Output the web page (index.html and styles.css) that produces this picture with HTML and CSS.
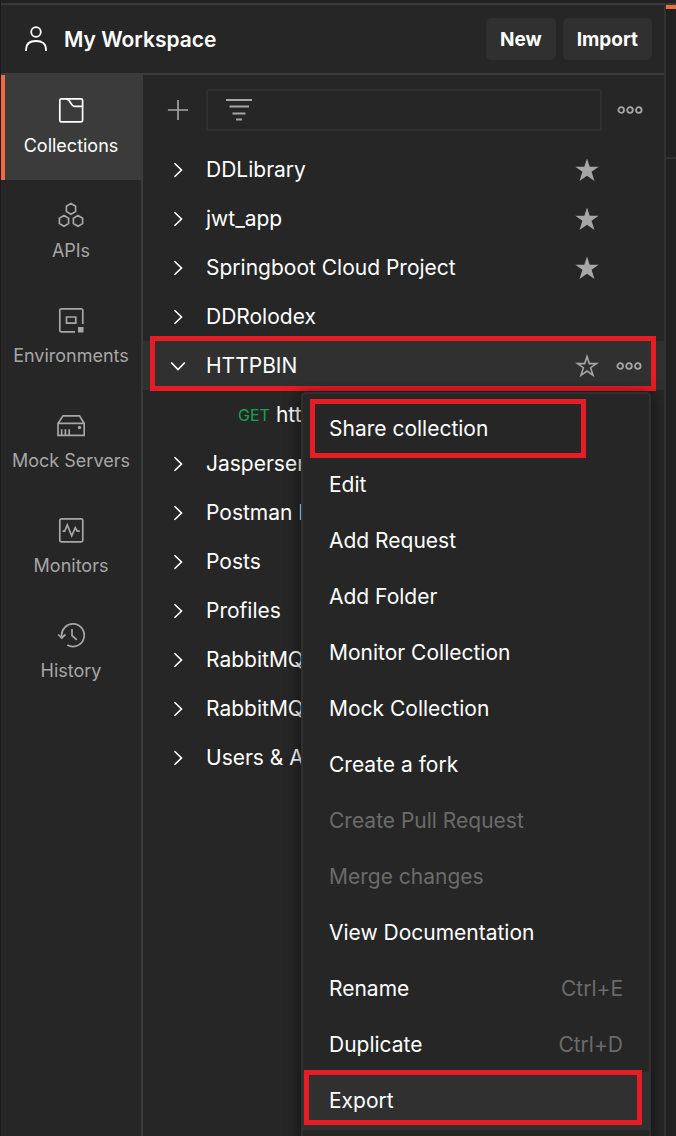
FILE: index.html
```html
<!DOCTYPE html>
<html lang="en">
<head>
<meta charset="utf-8">
<title>My Workspace</title>
<link rel="stylesheet" href="styles.css">
</head>
<body>
<svg class="defs" aria-hidden="true">
  <symbol id="chevron" viewBox="0 0 24 24"><path d="M8.500 5.200l7 6.800-7 6.800" fill="none" stroke="currentColor" stroke-width="1.600"/></symbol>
  <symbol id="star" viewBox="0 0 24 24"><path d="M12 .5l2.700 8.300h9l-7.100 5 2.900 9.200-7.500-5.300L4.500 23l2.900-9.200-7.100-5h9z" fill="currentColor"/></symbol>
  <symbol id="star-outline" viewBox="0 0 24 24"><path d="M12 2.600l2.300 7h7.200l-5.900 4.100 2.400 7.600-6-4.300-6 4.300 2.400-7.600-5.900-4.100h7.200z" fill="none" stroke="currentColor" stroke-width="1.600"/></symbol>
  <symbol id="dots" viewBox="0 0 26 10"><g fill="none" stroke="currentColor" stroke-width="1.800"><circle cx="4.200" cy="5" r="2.800"/><circle cx="13" cy="5" r="2.800"/><circle cx="21.800" cy="5" r="2.800"/></g></symbol>
</svg>
<div class="app">
  <div class="window">
    <header class="header">
      <svg class="user-icon" viewBox="0 0 24 26" fill="none" stroke="currentColor" stroke-width="1.800"><circle cx="12" cy="6" r="4.800"/><path d="M2 25v-1.500C2 18 5.500 15 12 15s10 3 10 8.500V25"/></svg>
      <h1 class="title">My Workspace</h1>
      <button class="btn">New</button>
      <button class="btn">Import</button>
    </header>
    <div class="body">
      <nav class="sidebar">
        <a class="nav-item active" href="#"><svg class="nav-icon" viewBox="0 0 28 28"><rect x="2.800" y="2.800" width="22.800" height="23" rx="1.500"/><path d="M9 2.800c1.500 0 2.400.8 3.200 2l2.600 3.800c.6 1 1.400 1.700 2.800 1.700h8"/></svg>Collections</a>
        <a class="nav-item" href="#"><svg class="nav-icon" viewBox="0 0 28 28"><path d="M14 2.600l4.600 2.600v5.400L14 13.200l-4.600-2.600V5.200zM7 14.600l4.600 2.600v5.400L7 25.200l-4.600-2.600v-5.400zM21 14.600l4.600 2.600v5.400L21 25.200l-4.600-2.600v-5.400z"/></svg>APIs</a>
        <a class="nav-item" href="#"><svg class="nav-icon" viewBox="0 0 28 28"><path d="M18 25.800H4.300a1.500 1.500 0 0 1-1.500-1.500v-20a1.500 1.500 0 0 1 1.500-1.500h20a1.500 1.500 0 0 1 1.500 1.500V18"/><path d="M9.500 11h9.300v6.200H9.500z"/><path class="solid" d="M21 21h5.500v5.500H21z"/></svg>Environments</a>
        <a class="nav-item" href="#"><svg class="nav-icon" viewBox="0 0 28 28"><path d="M1 12.500L6 4.800h16.500l4.700 7.700M1 12.300h26.200v12H1zM4.600 24v-5.800M8.400 24v-5.800M12.200 24v-5.800"/><circle class="solid" cx="22.500" cy="16.500" r="1.700"/></svg>Mock Servers</a>
        <a class="nav-item" href="#"><svg class="nav-icon" viewBox="0 0 28 28"><rect x="2.800" y="2.800" width="23" height="23" rx="1.500"/><path d="M5.500 15.200h2.200l2.600-6.200 4.400 10.800 3.600-8.200 1.900 3.600h2.600"/></svg>Monitors</a>
        <a class="nav-item" href="#"><svg class="nav-icon" viewBox="0 0 28 28"><path d="M4.700 15.500A11.300 11.300 0 1 1 10.300 24M1.200 13.500l3.500 3.500 3.800-3.500M15 8v6.500l4.800 4.300"/></svg>History</a>
      </nav>
      <main class="main">
        <div class="toolbar">
          <button class="icon-btn add" aria-label="Add"><svg class="plus-icon" viewBox="0 0 24 24"><path d="M12 1v22M1 12h22" stroke="currentColor" stroke-width="1.800"/></svg></button>
          <label class="search"><svg class="filter-icon" viewBox="0 0 26 24"><path d="M0 2h26M3.500 8.500h19.500M6.500 15.500h13M10 21.500h6" stroke="currentColor" stroke-width="1.800"/></svg><input class="search-input" type="text" aria-label="Filter"></label>
          <button class="icon-btn more" aria-label="More"><svg class="dots-icon"><use href="#dots"/></svg></button>
        </div>
        <ul class="tree">
          <li class="row"><svg class="chevron"><use href="#chevron"/></svg><span class="name">DDLibrary</span><button class="icon-btn" aria-label="Favorite"><svg class="star-icon"><use href="#star"/></svg></button></li>
          <li class="row"><svg class="chevron"><use href="#chevron"/></svg><span class="name">jwt_app</span><button class="icon-btn" aria-label="Favorite"><svg class="star-icon"><use href="#star"/></svg></button></li>
          <li class="row"><svg class="chevron"><use href="#chevron"/></svg><span class="name">Springboot Cloud Project</span><button class="icon-btn" aria-label="Favorite"><svg class="star-icon"><use href="#star"/></svg></button></li>
          <li class="row"><svg class="chevron"><use href="#chevron"/></svg><span class="name">DDRolodex</span></li>
          <li class="row selected marked"><svg class="chevron open"><use href="#chevron"/></svg><span class="name">HTTPBIN</span><button class="icon-btn" aria-label="Favorite"><svg class="star-icon"><use href="#star-outline"/></svg></button><button class="icon-btn row-more" aria-label="More"><svg class="dots-icon"><use href="#dots"/></svg></button>
            <div class="menu">
              <button class="menu-item marked share">Share collection</button>
              <button class="menu-item">Edit</button>
              <button class="menu-item">Add Request</button>
              <button class="menu-item">Add Folder</button>
              <button class="menu-item">Monitor Collection</button>
              <button class="menu-item">Mock Collection</button>
              <button class="menu-item">Create a fork</button>
              <button class="menu-item" disabled>Create Pull Request</button>
              <button class="menu-item" disabled>Merge changes</button>
              <button class="menu-item">View Documentation</button>
              <button class="menu-item">Rename<kbd class="shortcut">Ctrl+E</kbd></button>
              <button class="menu-item">Duplicate<kbd class="shortcut">Ctrl+D</kbd></button>
              <button class="menu-item marked export">Export</button>
              <hr class="separator">
            </div>
          </li>
          <li class="row request"><span class="method">GET</span><span class="name">http</span></li>
          <li class="row"><svg class="chevron"><use href="#chevron"/></svg><span class="name">Jaspersen</span></li>
          <li class="row"><svg class="chevron"><use href="#chevron"/></svg><span class="name">Postman E</span></li>
          <li class="row"><svg class="chevron"><use href="#chevron"/></svg><span class="name">Posts</span></li>
          <li class="row"><svg class="chevron"><use href="#chevron"/></svg><span class="name">Profiles</span></li>
          <li class="row"><svg class="chevron"><use href="#chevron"/></svg><span class="name">RabbitMQ</span></li>
          <li class="row"><svg class="chevron"><use href="#chevron"/></svg><span class="name">RabbitMQ</span></li>
          <li class="row"><svg class="chevron"><use href="#chevron"/></svg><span class="name">Users &amp; A</span></li>
        </ul>
      </main>
    </div>
  </div>
  <aside class="editor"><div class="tab"></div></aside>
</div>
</body>
</html>
```
FILE: styles.css
```css
*, *::after { box-sizing: border-box; }
body {
  margin: 0;
  background: #212121;
  color: #fff;
  font-family: Inter, "Liberation Sans", sans-serif;
  font-size: 21px;
}
button { font: inherit; color: inherit; background: none; border: 0; padding: 0; }
svg { display: block; flex: none; }
.defs { position: absolute; width: 0; height: 0; }

.app {
  display: flex;
  height: 100vh;
  overflow: hidden;
  padding-top: 3px;
  border-left: 1px solid #1a1a1a;
}
.window {
  flex: 1;
  min-width: 0;
  display: flex;
  flex-direction: column;
  background: #262626;
  border-top: 2px solid #393939;
  border-right: 2px solid #323232;
}

.header {
  display: flex;
  align-items: center;
  gap: 7px;
  height: 70px;
  flex: none;
  padding: 0 12px 0 23px;
  border-bottom: 2px solid #3b3b3b;
}
.user-icon { width: 24px; height: 26px; }
.title { flex: 1; margin: 0 0 0 9px; font-size: 21px; font-weight: 600; }
.btn {
  height: 42px;
  padding: 0 14px;
  border-radius: 5px;
  background: #303030;
  font-size: 19px;
  font-weight: 700;
}

.body { flex: 1; display: flex; min-height: 0; }
.sidebar { flex: none; width: 142px; border-right: 2px solid #3b3b3b; }
.nav-item {
  display: flex;
  flex-direction: column;
  align-items: center;
  gap: 10px;
  height: 105px;
  padding-top: 21px;
  color: #a6a6a6;
  font-size: 18px;
  line-height: 24px;
  text-decoration: none;
  white-space: nowrap;
}
.nav-item.active { color: #fff; background: #3b3b3b; box-shadow: inset 4px 0 #f26b3a; }
.nav-icon { width: 28px; height: 28px; fill: none; stroke: currentColor; stroke-width: 1.7; }
.nav-icon .solid { fill: currentColor; stroke: none; }

.main { flex: 1; min-width: 0; }
.toolbar { display: flex; align-items: center; height: 70px; padding: 0 21px 0 24px; color: #a6a6a6; }
.plus-icon { width: 22px; height: 22px; }
.search {
  flex: 1;
  display: flex;
  align-items: center;
  height: 42px;
  margin: 0 15px 0 17px;
  padding: 0 18px;
  border: 2px solid #303030;
  border-radius: 3px;
}
.filter-icon { width: 26px; height: 24px; }
.search-input { flex: 1; min-width: 0; background: none; border: 0; outline: 0; color: #fff; font: inherit; }
.dots-icon { width: 26px; height: 10px; }
.star-icon { width: 24px; height: 24px; }
.icon-btn { color: #a6a6a6; }

.tree { list-style: none; margin: 0; padding: 0; }
.row {
  position: relative;
  display: flex;
  align-items: center;
  height: 49px;
  padding: 0 65px 0 23px;
  white-space: nowrap;
}
.row .name { flex: 1; margin-left: 16px; }
.chevron { width: 24px; height: 24px; }
.chevron.open { transform: rotate(90deg); }
.row.selected { padding-right: 22px; background: #303030; }
.row-more { margin-left: 17px; }
.row.request { padding-left: 95px; }
.row.request .name { margin-left: 6px; }
.method { color: #16a34f; font-size: 16px; }

.menu {
  position: absolute;
  z-index: 1;
  top: 51px;
  right: 13px;
  width: 350px;
  height: 800px;
  padding-top: 6px;
  background: #262626;
  border: 2px solid #303030;
  border-radius: 5px;
  box-shadow: 0 2px 16px rgba(0, 0, 0, 0.6);
}
.menu-item {
  position: relative;
  display: flex;
  align-items: center;
  justify-content: space-between;
  width: 100%;
  height: 56px;
  padding: 0 26px;
}
.menu-item:disabled { color: #6b6b6b; }
.menu-item.export { background: #303030; }
.shortcut { color: #6b6b6b; font: inherit; }
.separator { margin: 0; border: 0; border-top: 2px solid #303030; }

.marked::after { content: ""; position: absolute; border: 5px solid #e81c24; pointer-events: none; }
.selected::after { top: -5px; right: 8px; bottom: -1px; left: 7px; }
.share::after { top: -1px; bottom: -2px; left: 7px; width: 276px; }
.export::after { top: -2px; right: 7px; bottom: 3px; left: 1px; }

.editor { flex: none; width: 10px; border-top: 2px solid #393939; }
.tab { height: 154px; border-top: 4px solid #e8703f; border-bottom: 2px solid #323232; }
```
